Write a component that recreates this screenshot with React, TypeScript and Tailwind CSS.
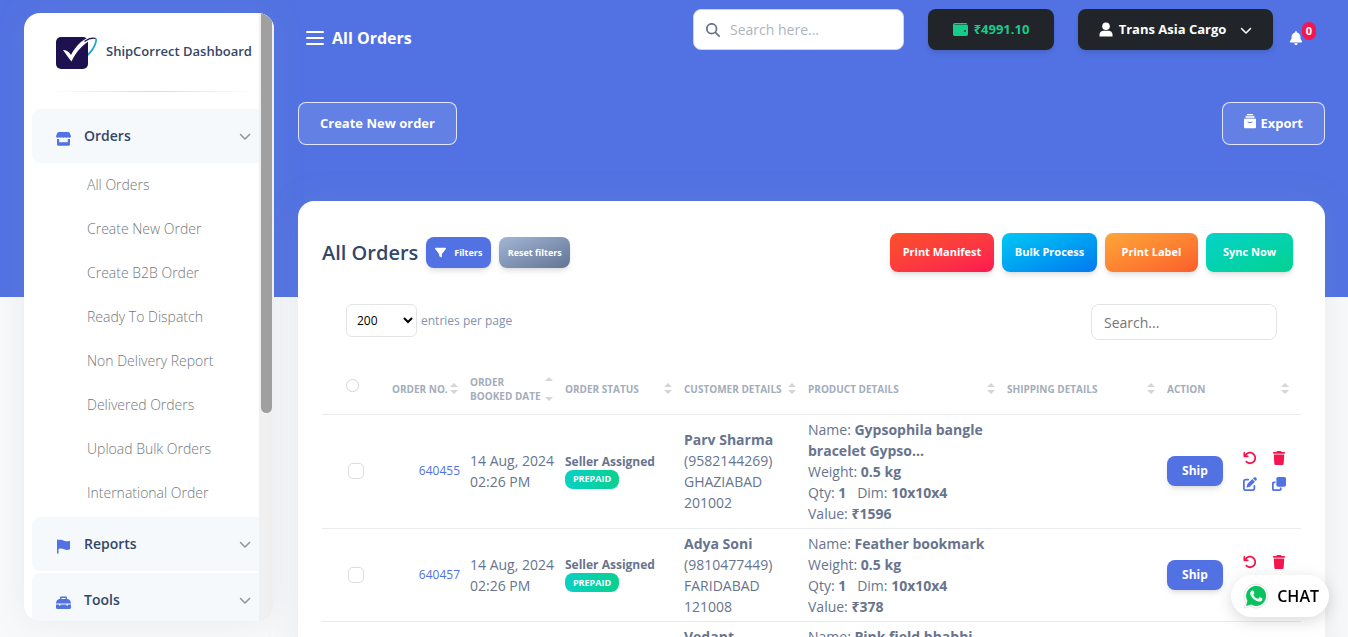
import type { ReactNode } from "react";
import {
  FaArrowRotateLeft,
  FaBell,
  FaChevronDown,
  FaClone,
  FaFilter,
  FaMagnifyingGlass,
  FaPenToSquare,
  FaTrash,
} from "react-icons/fa6";

interface Order {
  id: string;
  date: string;
  time: string;
  customer: string;
  phone: string;
  city: string;
  pin: string;
  product: string;
  value: string;
}

const ORDERS: Order[] = [
  {
    id: "640455",
    date: "14 Aug, 2024",
    time: "02:26 PM",
    customer: "Parv Sharma",
    phone: "(9582144269)",
    city: "GHAZIABAD",
    pin: "201002",
    product: "Gypsophila bangle bracelet Gypso...",
    value: "₹1596",
  },
  {
    id: "640457",
    date: "14 Aug, 2024",
    time: "02:26 PM",
    customer: "Adya Soni",
    phone: "(9810477449)",
    city: "FARIDABAD",
    pin: "121008",
    product: "Feather bookmark",
    value: "₹378",
  },
  {
    id: "640458",
    date: "14 Aug, 2024",
    time: "02:26 PM",
    customer: "Vedant",
    phone: "(9810477450)",
    city: "DELHI",
    pin: "110001",
    product: "Pink field bhabhi",
    value: "₹450",
  },
];

const ORDER_LINKS = [
  "All Orders",
  "Create New Order",
  "Create B2B Order",
  "Ready To Dispatch",
  "Non Delivery Report",
  "Delivered Orders",
  "Upload Bulk Orders",
  "International Order",
];

function Logo() {
  return (
    <svg viewBox="0 0 42 34" className="h-[34px] w-[42px] shrink-0" aria-hidden="true">
      <rect x="0" y="2" width="32" height="32" rx="5" fill="#1d1150" />
      <path d="M7 15c3.500-.5 6 2 8 5C19 12 26 4.500 33 2.500l6 .5C29 7 21 15 15.500 26.500c-3-3.500-6-8-8.500-11.500z" fill="#fff" />
      <path d="M28.500 6.500C32 4 37 2.600 40 3.500" fill="none" stroke="#1d1150" strokeWidth="1.100" />
      <path d="M39.200 3.200c.8-.2 1.500.2 1.700.8.600 4-2.500 11-8.900 17v-2.800c4.500-4.200 8-10.700 7.200-15z" fill="#1fa3d4" />
    </svg>
  );
}

function ShopIcon() {
  return (
    <svg viewBox="0 0 15 15" className="h-[15px] w-[15px]" fill="currentColor" aria-hidden="true">
      <path d="M3 1h9c.8 0 1.400.4 1.700 1.100L15 5.300c0 .9-.7 1.500-1.500 1.500S12 6.300 12 5.700c0 .6-.7 1.100-1.500 1.100S9 6.300 9 5.700c0 .6-.7 1.100-1.500 1.100S6 6.300 6 5.700c0 .6-.7 1.100-1.500 1.100S3 6.300 3 5.700c0 .6-.7 1.100-1.500 1.100S0 6.200 0 5.300l1.300-3.200C1.600 1.400 2.200 1 3 1z" />
      <path d="M1 8h2.200v3.200h8.600V8H14v5.200c0 .9-.6 1.500-1.500 1.500h-10c-.9 0-1.500-.6-1.500-1.500z" />
    </svg>
  );
}

function FlagIcon() {
  return (
    <svg viewBox="0 0 15 15" className="h-[15px] w-[15px]" fill="currentColor" aria-hidden="true">
      <path d="M1 .5h1.500v.8c2-.8 3.800-.4 5.500.4 2 .9 4 .8 6 0v8.500c-2 .9-4 1-6 .1-1.800-.8-3.600-1-5.500-.2v4.400H1z" />
    </svg>
  );
}

function ToolsIcon() {
  return (
    <svg viewBox="0 0 15 15" className="h-[15px] w-[15px]" fill="currentColor" aria-hidden="true">
      <path
        fillRule="evenodd"
        d="M5.200 1.500h4.600c.6 0 1.200.6 1.200 1.200V4h1c1.700.6 3 2.200 3 4.500H0C0 6.200 1.300 4.600 3 4h1V2.700c0-.6.600-1.200 1.200-1.200zM5.500 3v1h4V3z"
      />
      <path d="M0 9.500h3v1h1.500v-1h6v1H12v-1h3v3c0 .8-.6 1.500-1.500 1.500h-12C.6 14 0 13.300 0 12.500z" />
    </svg>
  );
}

function WalletIcon() {
  return (
    <svg viewBox="0 0 15 13" className="h-[13px] w-[15px]" fill="currentColor" aria-hidden="true">
      <path
        fillRule="evenodd"
        d="M1.800 0h11c.8 0 1.200.5 1.200 1H1.500v.5h11.800c1 0 1.700.7 1.700 1.700v8.100c0 1-.7 1.700-1.700 1.700H1.700C.7 13 0 12.300 0 11.300V1.800C0 .8.8 0 1.800 0zM12 7a.9.9 0 1 0 0 1.800A.9.9 0 0 0 12 7z"
      />
    </svg>
  );
}

function UserIcon() {
  return (
    <svg viewBox="0 0 14 15" className="h-[15px] w-[14px]" fill="currentColor" aria-hidden="true">
      <circle cx="7" cy="4.200" r="3.800" />
      <path d="M.5 14.500v-2c0-2.200 2-3.800 4-3.800h5c2 0 4 1.600 4 3.800v2z" />
    </svg>
  );
}

function ArchiveIcon() {
  return (
    <svg viewBox="0 0 12 15" className="mb-1 h-[15px] w-3" fill="currentColor" aria-hidden="true">
      <rect x="3" y="0" width="6" height="1.200" />
      <rect x="1.500" y="1.800" width="9" height="2.400" opacity="0.8" />
      <path
        fillRule="evenodd"
        d="M0 4.700h12V13c0 .8-.5 1.300-1.300 1.300H1.300C.5 14.300 0 13.800 0 13zM3.500 7.500c0 1 .6 1.400 1.500 1.400h2c.9 0 1.500-.4 1.500-1.400H7.600c0 .4-.2.6-.6.6H5c-.4 0-.6-.2-.6-.6z"
      />
    </svg>
  );
}

function WhatsAppIcon() {
  return (
    <svg viewBox="0 0 26 26" className="h-[26px] w-[26px]" aria-hidden="true">
      <path d="M1 25l1.600-6A12 12 0 1 1 7 23.400z" fill="#fff" stroke="#d5d8d6" strokeWidth="0.700" />
      <path d="M3 23l1.400-5.200A10 10 0 1 1 8.200 21.600z" fill="#0ac25d" />
      <path
        d="M9.600 7.500c.5 0 .7.100.9.600l.8 1.900c.1.400 0 .6-.8 1.600-.2.200-.1.400 0 .6 1 1.700 2.400 2.900 4.100 3.600.3.100.5.100.7-.1l1-1.200c.2-.3.500-.3.700-.2l2.100 1c.3.200.3.300.3.600 0 1.700-1.600 2.700-3 2.700-2.600 0-8.900-4-9.200-8.200 0-1.300.9-2.800 2.400-2.900z"
        fill="#fff"
      />
    </svg>
  );
}

function NavGroup({ label, icon }: { label: string; icon: ReactNode }) {
  return (
    <button
      type="button"
      className="flex h-[54px] w-full shrink-0 items-center rounded-l-lg bg-[#f5f9fc] pr-2 pl-6 text-left text-sm
                 font-semibold text-[#344767]"
    >
      <span className="w-7 pt-1 text-[#5272e3]">{icon}</span>
      <span className="flex-1">{label}</span>
      <FaChevronDown className="h-3 w-3 text-[#8f9499]" aria-hidden="true" />
    </button>
  );
}

function Sidebar() {
  return (
    <aside
      className="mt-[13px] mb-4 ml-6 flex w-[250px] shrink-0 overflow-hidden rounded-2xl bg-white
                 shadow-[0_0_32px_rgba(136,152,170,0.15)]"
    >
      <div className="flex min-w-0 flex-1 flex-col overflow-hidden">
        <a href="#" className="flex h-[78px] shrink-0 items-center gap-2 pl-8 text-[13px] font-semibold whitespace-nowrap text-[#344767]">
          <Logo />
          ShipCorrect Dashboard
        </a>
        <div className="ml-6 h-px shrink-0 bg-linear-to-r from-transparent via-[#d8dbde] to-transparent" />
        <nav className="mt-[17px] flex flex-col pl-2">
          <NavGroup label="Orders" icon={<ShopIcon />} />
          <ul>
            {ORDER_LINKS.map((link) => (
              <li key={link}>
                <a href="#" className="flex h-11 items-center pl-[55px] text-sm font-light text-[#74777a]">
                  {link}
                </a>
              </li>
            ))}
          </ul>
          <div className="mt-0.5 flex flex-col gap-0.5">
            <NavGroup label="Reports" icon={<FlagIcon />} />
            <NavGroup label="Tools" icon={<ToolsIcon />} />
          </div>
        </nav>
      </div>
      <div className="w-[15px] shrink-0 bg-[#f0f0f0] px-0.5">
        <div className="h-[400px] w-[11px] rounded-b-full bg-[#a0a0a0]" />
      </div>
    </aside>
  );
}

function TopBar() {
  return (
    <header className="flex items-start pt-[9px] pr-[22px] pl-2">
      <button type="button" aria-label="Toggle menu" className="mt-[22px] flex w-[18px] flex-col gap-1">
        <span className="h-0.5 rounded-full bg-white" />
        <span className="h-0.5 rounded-full bg-white" />
        <span className="h-0.5 rounded-full bg-white" />
      </button>
      <h1 className="mt-[17px] ml-2 flex-1 text-base leading-6 font-bold text-white">All Orders</h1>
      <label className="flex h-[41px] w-[211px] items-center rounded-lg border border-[#d2d6da] bg-white pl-3">
        <FaMagnifyingGlass className="h-3.5 w-3.5 shrink-0 text-[#67748e]" aria-hidden="true" />
        <input
          type="search"
          aria-label="Search"
          placeholder="Search here..."
          className="ml-2.5 w-full min-w-0 bg-transparent text-sm outline-none placeholder:text-[#adb5bd]"
        />
      </label>
      <button
        type="button"
        className="ml-6 flex h-[41px] w-[126px] items-center justify-center gap-1.5 rounded-lg bg-[#212529] text-[13px]
                   font-bold text-[#15cc8b] shadow-md"
      >
        <WalletIcon />
        ₹4991.10
      </button>
      <button
        type="button"
        className="ml-6 flex h-[41px] w-[195px] items-center justify-center gap-1.5 rounded-lg bg-[#212529] text-[13px]
                   font-bold whitespace-nowrap text-white shadow-md"
      >
        <UserIcon />
        Trans Asia Cargo
        <FaChevronDown className="ml-2 h-3 w-3" aria-hidden="true" />
      </button>
      <button type="button" aria-label="Notifications" className="relative mt-[22px] ml-4 text-white">
        <FaBell className="h-3.5 w-3.5" />
        <span
          className="absolute -top-[9px] left-[13px] flex h-[18px] w-3.5 items-center justify-center rounded-full
                     bg-[#f5164f] text-[11px] font-bold"
        >
          0
        </span>
      </button>
    </header>
  );
}

const outlineButton =
  "flex h-[43px] items-center justify-center gap-1 rounded-lg border border-white/80 bg-white/10 px-[21px] text-[13px] font-bold text-white";

const actionButton =
  "flex h-[39px] items-center justify-center rounded-lg bg-linear-to-br text-[11px] font-bold whitespace-nowrap text-white shadow-md";

// Stacked up/down carets beside a column title; they spread to the height of the title.
function SortArrows() {
  return (
    <span className="flex flex-col justify-between gap-[3px] self-stretch py-0.5">
      <span className="border-x-4 border-b-4 border-x-transparent border-b-[#d3d6d9]" />
      <span className="border-x-4 border-t-4 border-x-transparent border-t-[#d3d6d9]" />
    </span>
  );
}

function HeadCell({ width, children }: { width: string; children: ReactNode }) {
  return (
    <th scope="col" className={`${width} p-0 pr-3 align-middle`}>
      <button type="button" className="flex w-full items-center justify-between text-left text-[10px] leading-[14px] font-bold text-[#a3adbb]">
        <span>{children}</span>
        <SortArrows />
      </button>
    </th>
  );
}

function OrderRow({ order }: { order: Order }) {
  return (
    <tr className="border-b border-[#e9ecef]">
      <td className="pl-[26px]">
        <input
          type="checkbox"
          aria-label={`Select order ${order.id}`}
          className="block h-4 w-4 appearance-none rounded-[5px] border border-[#dadde0] bg-white"
        />
      </td>
      <td className="pr-[10px] text-right text-xs">
        <a href="#" className="text-[#5272e3]">
          {order.id}
        </a>
      </td>
      <td className="whitespace-nowrap">
        {order.date}
        <br />
        {order.time}
      </td>
      <td className="text-xs">
        <div className="leading-4 font-bold">Seller Assigned</div>
        <span
          className="flex h-[19px] w-[54px] items-center justify-center rounded-lg bg-linear-to-r from-[#0bd0c3]
                     to-[#0cd08f] text-[9px] font-bold text-white"
        >
          PREPAID
        </span>
      </td>
      <td>
        <b>{order.customer}</b>
        <br />
        {order.phone}
        <br />
        {order.city}
        <br />
        {order.pin}
      </td>
      <td className="py-1 pr-3">
        Name: <b>{order.product}</b>
        <br />
        Weight: <b>0.5 kg</b>
        <br />
        Qty: <b>1</b> &nbsp; Dim: <b>10x10x4</b>
        <br />
        Value: <b>{order.value}</b>
      </td>
      <td />
      <td>
        <div className="flex items-center gap-5">
          <button type="button" className="h-[30px] w-14 rounded-lg bg-[#5272e3] text-xs font-bold text-white shadow-md">
            Ship
          </button>
          <div className="grid grid-cols-2 gap-x-[15px] gap-y-3 text-sm text-[#5272e3]">
            <button type="button" aria-label="Cancel order" className="text-[#f5164f]">
              <FaArrowRotateLeft />
            </button>
            <button type="button" aria-label="Delete order" className="text-[#f5164f]">
              <FaTrash />
            </button>
            <button type="button" aria-label="Edit order">
              <FaPenToSquare />
            </button>
            <button type="button" aria-label="Copy order">
              <FaClone />
            </button>
          </div>
        </div>
      </td>
    </tr>
  );
}

function OrdersCard() {
  return (
    <section className="mt-14 rounded-t-2xl bg-white px-6 pt-8 shadow-[0_0_32px_rgba(136,152,170,0.15)]">
      <div className="flex items-center gap-2 pr-2">
        <h2 className="text-xl font-semibold text-[#344767]">All Orders</h2>
        <button
          type="button"
          className="flex h-[31px] w-[65px] items-center justify-center gap-2 rounded-lg bg-[#5272e3] text-[9px]
                     font-bold text-white shadow-md"
        >
          <FaFilter className="h-[11px] w-[11px]" aria-hidden="true" />
          Filters
        </button>
        <button
          type="button"
          className="h-[31px] w-[71px] rounded-lg bg-linear-to-br from-[#a4b6d6] to-[#627594] text-[9px] font-bold
                     whitespace-nowrap text-white shadow-md"
        >
          Reset filters
        </button>
        <div className="ml-auto flex gap-2">
          <button type="button" className={`${actionButton} w-[104px] from-[#fb5026] to-[#fd1550]`}>
            Print Manifest
          </button>
          <button type="button" className={`${actionButton} w-[95px] from-[#07c8f3] to-[#0878f0]`}>
            Bulk Process
          </button>
          <button type="button" className={`${actionButton} w-[93px] from-[#fda638] to-[#fb5c2c]`}>
            Print Label
          </button>
          <button type="button" className={`${actionButton} w-[87px] from-[#08d2c9] to-[#06d290]`}>
            Sync Now
          </button>
        </div>
      </div>

      <div className="mt-8 flex items-start justify-between px-6">
        <label className="flex items-center gap-1 text-xs text-[#8392ab]">
          <select className="h-[33px] w-[71px] rounded-md border border-[#e2e5e8] bg-white pl-1.5 text-xs text-black">
            <option>200</option>
          </select>
          entries per page
        </label>
        <input
          type="search"
          aria-label="Search orders"
          placeholder="Search..."
          className="h-9 w-[186px] rounded-lg border border-[#e2e5e8] px-3 text-sm outline-none placeholder:text-[#757575]"
        />
      </div>

      <table className="mt-6 w-full table-fixed border-collapse text-left text-sm leading-[21px] text-[#67748e]">
        <thead>
          <tr className="h-[50px] border-b border-[#e9ecef]">
            <th scope="col" className="w-[70px] p-0 pl-6 align-middle">
              <input
                type="checkbox"
                aria-label="Select all orders"
                className="mb-1.5 block h-[13px] w-[13px] appearance-none rounded-full border border-[#d3d6d9] bg-white"
              />
            </th>
            <HeadCell width="w-[78px]">ORDER NO.</HeadCell>
            <HeadCell width="w-[95px]">
              ORDER
              <br />
              BOOKED DATE
            </HeadCell>
            <HeadCell width="w-[119px]">ORDER STATUS</HeadCell>
            <HeadCell width="w-[124px]">CUSTOMER DETAILS</HeadCell>
            <HeadCell width="w-[199px]">PRODUCT DETAILS</HeadCell>
            <HeadCell width="w-[160px]">SHIPPING DETAILS</HeadCell>
            <HeadCell width="w-[134px]">ACTION</HeadCell>
          </tr>
        </thead>
        <tbody>
          {ORDERS.map((order) => (
            <OrderRow key={order.id} order={order} />
          ))}
        </tbody>
      </table>
    </section>
  );
}

export default function App() {
  return (
    <div
      className="flex h-screen overflow-hidden bg-[linear-gradient(#5272e3_297px,#f8f9fa_297px)]
                 font-['Open_Sans','Noto_Sans',sans-serif]"
    >
      <Sidebar />
      <main className="min-w-0 flex-1 pr-[23px] pl-6">
        <TopBar />
        <div className="mt-[52px] flex justify-between">
          <button type="button" className={outlineButton}>
            Create New order
          </button>
          <button type="button" className={outlineButton}>
            <ArchiveIcon />
            Export
          </button>
        </div>
        <OrdersCard />
      </main>
      <a
        href="#"
        className="fixed right-[19px] bottom-5 flex h-[42px] items-center gap-2 rounded-full bg-white pr-2.5 pl-3 text-base
                   font-semibold text-black shadow-[0_4px_16px_rgba(0,0,0,0.15)]"
      >
        <WhatsAppIcon />
        CHAT
      </a>
    </div>
  );
}
